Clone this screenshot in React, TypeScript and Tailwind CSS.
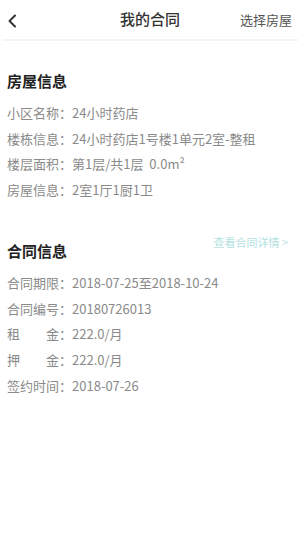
import React from 'react';

const font = { fontFamily: '"Noto Sans CJK SC", "Noto Sans", sans-serif' };

const houseRows = [
  { label: '小区名称：', value: '24小时药店' },
  { label: '楼栋信息：', value: '24小时药店1号楼1单元2室-整租' },
  { label: '楼层面积：', value: '第1层/共1层  0.0m²' },
  { label: '房屋信息：', value: '2室1厅1厨1卫' },
];

const contractRows = [
  { label: '合同期限：', value: '2018-07-25至2018-10-24' },
  { label: '合同编号：', value: '20180726013' },
  { label: '租　　金：', value: '222.0/月' },
  { label: '押　　金：', value: '222.0/月' },
  { label: '签约时间：', value: '2018-07-26' },
];

const InfoRow = ({ label, value }: { label: string; value: string }) => (
  <div className="flex h-[25.7px] items-center text-[13px] text-[#8a8a8a] whitespace-pre">
    <span>{label}</span>
    <span>{value}</span>
  </div>
);

export default function App() {
  return (
    <div className="w-[300px] h-[535px] bg-white overflow-hidden" style={font}>
      <div className="relative flex h-[41px] items-center justify-center border-b-2 border-[#f4f4f4] mx-[2px]">
        <svg className="absolute left-[5px] top-[14px]" width="10" height="14" viewBox="0 0 10 14">
          <path d="M8 1.5 L2.5 7 L8 12.5" fill="none" stroke="#333" strokeWidth="2" strokeLinecap="round" strokeLinejoin="round" />
        </svg>
        <span className="text-[15px] font-medium text-[#333]">我的合同</span>
        <span className="absolute right-[6px] text-[13px] text-[#555]">选择房屋</span>
      </div>

      <div className="px-[7px]">
        <div className="mt-[29px] h-[22px] leading-[22px] text-[15px] font-bold text-[#222]">房屋信息</div>
        <div className="mt-[8px]">
          {houseRows.map((r) => (
            <InfoRow key={r.label} {...r} />
          ))}
        </div>

        <div className="mt-[37px] flex h-[22px] items-start justify-between">
          <span className="leading-[22px] text-[15px] font-bold text-[#222]">合同信息</span>
          <span className="mr-[5px] -mt-[5px] text-[11px] leading-[14px] text-[#b3e2df]">查看合同详情 &gt;</span>
        </div>
        <div className="mt-[8px]">
          {contractRows.map((r) => (
            <InfoRow key={r.label} {...r} />
          ))}
        </div>
      </div>
    </div>
  );
}
